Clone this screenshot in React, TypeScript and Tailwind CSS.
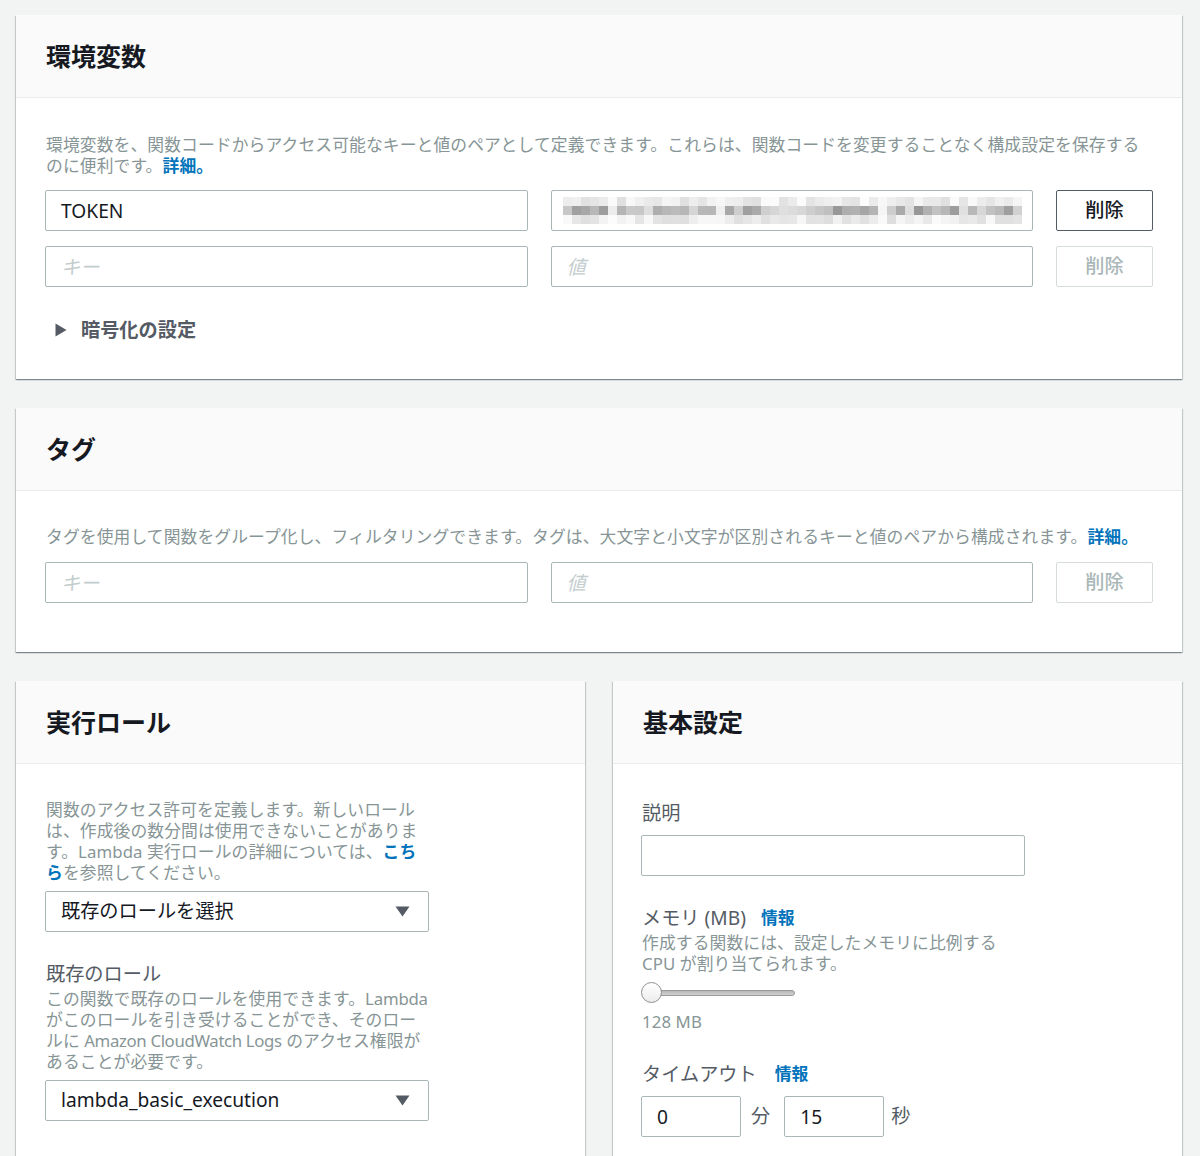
import React from "react";

const font = "font-['Noto_Sans','Noto_Sans_CJK_JP',sans-serif]";

const cardShadow =
  "shadow-[0_1px_1px_0_rgba(0,28,36,0.3),1px_1px_1px_0_rgba(0,28,36,0.15),-1px_1px_1px_0_rgba(0,28,36,0.15)]";

function Card({ title, children, bodyClass }: { title: string; children: React.ReactNode; bodyClass: string }) {
  return (
    <div className={`bg-white ${cardShadow}`}>
      <div className="h-[83px] bg-[#fafafa] border-b border-[#eaeded] flex items-center px-[30px]">
        <h2 className="text-[25px] font-bold text-[#16191f] leading-none">{title}</h2>
      </div>
      <div className={bodyClass}>{children}</div>
    </div>
  );
}

function TextInput({ value, placeholder, className = "" }: { value?: string; placeholder?: string; className?: string }) {
  return (
    <div
      className={`h-[41px] border border-[#aab7b8] rounded-[2px] bg-white flex items-center pl-[15px] pt-[1px] text-[19.2px] ${className}`}
    >
      {value ? (
        <span className="text-[#16191f]">{value}</span>
      ) : placeholder ? (
        <span className="italic text-[#c4cdce]">{placeholder}</span>
      ) : null}
    </div>
  );
}

function DeleteButton({ disabled }: { disabled?: boolean }) {
  return (
    <button
      className={`h-[41px] rounded-[2px] border text-[19.2px] font-medium flex items-center justify-center ${
        disabled ? "border-[#d5dbdb] text-[#aab7b8]" : "border-[#545b64] text-[#16191f]"
      }`}
    >
      削除
    </button>
  );
}

// pixelated (redacted) secret value
function Redacted() {
  let seed = 7;
  const rnd = () => {
    seed = (seed * 9301 + 49297) % 233280;
    return seed / 233280;
  };
  const cols = 51;
  const rows = [0, 1, 2].map((r) =>
    Array.from({ length: cols }, (_, c) => {
      const gap = c === 5 || c === 17 || c === 35;
      let v: number;
      if (r === 1) v = gap ? 235 + rnd() * 15 : 150 + rnd() * 75;
      else v = gap ? 245 + rnd() * 10 : 222 + rnd() * 30;
      const g = Math.round(v);
      return `rgb(${g},${g},${g})`;
    })
  );
  return (
    <div className="flex flex-col">
      {rows.map((row, i) => (
        <div key={i} className="flex h-[9px]">
          {row.map((c, j) => (
            <div key={j} className="w-[9px] h-full" style={{ backgroundColor: c }} />
          ))}
        </div>
      ))}
    </div>
  );
}

function SelectBox({ value }: { value: string }) {
  return (
    <div className="w-[384px] h-[41px] border border-[#aab7b8] rounded-[2px] bg-white flex items-center justify-between pl-[15px] pr-[18px] text-[19.2px] text-[#16191f]">
      <span>{value}</span>
      <svg width="15" height="11" viewBox="0 0 15 11">
        <path d="M0.5 0.5 H14.5 L7.5 10.5 Z" fill="#545b64" />
      </svg>
    </div>
  );
}

const desc = "text-[16.8px] leading-[21px] text-[#879596] tracking-[0.1px]";
const label = "text-[19.2px] leading-[24px] text-[#545b64]";
const link = "font-bold text-[#0073bb]";

export default function App() {
  return (
    <div className={`min-h-screen bg-[#f2f3f3] pl-[16px] pr-[18px] pt-[15px] pb-[40px] ${font}`}>
      <div className="flex flex-col gap-[29px]">
        <Card title="環境変数" bodyClass="px-[29px] pt-[36px] pb-[37px]">
          <p className={`${desc} pl-[1px]`}>
            環境変数を、関数コードからアクセス可能なキーと値のペアとして定義できます。これらは、関数コードを変更することなく構成設定を保存するのに便利です。
            <span className={link}>詳細。</span>
          </p>
          <div className="mt-[14px] grid grid-cols-[1fr_1fr_97px] gap-x-[23px] gap-y-[15px]">
            <TextInput value="TOKEN" />
            <div className="h-[41px] border border-[#aab7b8] rounded-[2px] bg-white flex items-center pl-[11px] overflow-hidden">
              <Redacted />
            </div>
            <DeleteButton />
            <TextInput placeholder="キー" />
            <TextInput placeholder="値" />
            <DeleteButton disabled />
          </div>
          <div className="mt-[31px] flex items-center h-[24px] pl-[10px]">
            <svg width="12" height="14" viewBox="0 0 12 14">
              <path d="M0.5 0.5 L11.5 7 L0.5 13.5 Z" fill="#545b64" />
            </svg>
            <span className="ml-[14px] text-[19.2px] font-bold text-[#545b64]">暗号化の設定</span>
          </div>
        </Card>

        <Card title="タグ" bodyClass="px-[29px] pt-[35px] pb-[49px]">
          <p className={`${desc} pl-[1px]`}>
            タグを使用して関数をグループ化し、フィルタリングできます。タグは、大文字と小文字が区別されるキーと値のペアから構成されます。
            <span className={link}>詳細。</span>
          </p>
          <div className="mt-[15px] grid grid-cols-[1fr_1fr_97px] gap-x-[23px]">
            <TextInput placeholder="キー" />
            <TextInput placeholder="値" />
            <DeleteButton disabled />
          </div>
        </Card>

        <div className="grid grid-cols-2 gap-[28px]">
          <Card title="実行ロール" bodyClass="px-[29px] pt-[35px] pb-[60px]">
            <p className={`${desc} max-w-[385px] pl-[1px]`}>
              関数のアクセス許可を定義します。新しいロールは、作成後の数分間は使用できないことがあります。Lambda 実行ロールの詳細については、
              <span className={link}>こちら</span>を参照してください。
            </p>
            <div className="mt-[8px]">
              <SelectBox value="既存のロールを選択" />
            </div>
            <div className={`${label} mt-[30px] pl-[1px]`}>既存のロール</div>
            <p className={`${desc} max-w-[385px] mt-[2px] pl-[1px]`}>
              この関数で既存のロールを使用できます。<span className="tracking-[-0.2px]">Lambda</span>{" "}
              がこのロールを引き受けることができ、そのロールに{" "}
              <span className="tracking-[-0.35px]">Amazon CloudWatch Logs</span>{" "}
              のアクセス権限があることが必要です。
            </p>
            <div className="mt-[8px]">
              <SelectBox value="lambda_basic_execution" />
            </div>
          </Card>

          <Card title="基本設定" bodyClass="px-[28px] pt-[37px] pb-[60px]">
            <div className={`${label} pl-[1px]`}>説明</div>
            <TextInput className="mt-[10px] w-[384px]" />

            <div className={`${label} mt-[30px] pl-[1px] flex items-center`}>
              <span>メモリ (MB)</span>
              <span className={`${link} ml-[15px] text-[16.8px]`}>情報</span>
            </div>
            <p className={`${desc} max-w-[384px] mt-[2px] pl-[1px]`}>
              作成する関数には、設定したメモリに比例する CPU が割り当てられます。
            </p>
            <div className="mt-[8px] relative w-[155px] h-[21px] flex items-center">
              <div className="ml-[10px] w-[144px] h-[6px] rounded-full border border-[#9a9a9a] bg-[linear-gradient(#b8b8b8,#d0d0d0)]" />
              <div className="absolute left-0 top-0 w-[21px] h-[21px] rounded-full border border-[#8f8f8f] bg-[linear-gradient(#ffffff,#ececec)]" />
            </div>
            <div className={`${desc} mt-[8px] pl-[1px]`}>128 MB</div>

            <div className={`${label} mt-[30px] pl-[1px] flex items-center`}>
              <span>タイムアウト</span>
              <span className={`${link} ml-[18px] text-[16.8px]`}>情報</span>
            </div>
            <div className="mt-[10px] flex items-center">
              <TextInput value="0" className="w-[100px]" />
              <span className="ml-[10px] text-[19.2px] text-[#545b64]">分</span>
              <TextInput value="15" className="ml-[14px] w-[100px]" />
              <span className="ml-[7px] text-[19.2px] text-[#545b64]">秒</span>
            </div>
          </Card>
        </div>
      </div>
    </div>
  );
}
